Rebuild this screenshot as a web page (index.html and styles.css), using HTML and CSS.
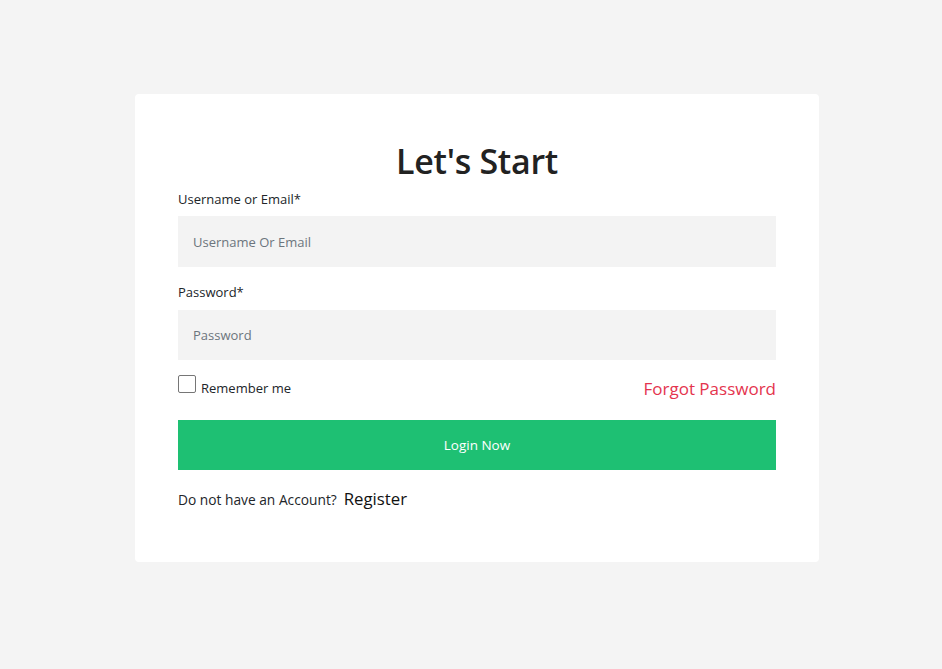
FILE: index.html
```html
<!DOCTYPE html>
<html>
<head>
<meta charset="utf-8">
<link rel="stylesheet" href="styles.css">
</head>
<body>
<div class="card">
  <h1 class="title">Let's Start</h1>
  <label class="label">Username or Email*</label>
  <div class="input">Username Or Email</div>
  <label class="label label-pw">Password*</label>
  <div class="input input-pw">Password</div>
  <div class="row">
    <div class="remember"><span class="check"></span><span class="remember-text">Remember me</span></div>
    <a class="forgot">Forgot Password</a>
  </div>
  <div class="btn">Login Now</div>
  <div class="footer"><span>Do not have an Account?</span><a class="register">Register</a></div>
</div>
</body>
</html>
```
FILE: styles.css
```css
* { box-sizing: border-box; }
body {
  margin: 0;
  background: #f4f4f4;
  font-family: "Open Sans", "Noto Sans", sans-serif;
  color: #212529;
}
.card {
  width: 684px;
  margin: 94px 0 0 135px;
  background: #fff;
  border-radius: 4px;
  padding: 43px 43px 50px;
  display: flex;
  flex-direction: column;
}
.title {
  margin: 0;
  text-align: center;
  font-size: 34px;
  font-weight: 600;
  line-height: 48px;
  color: #222;
  letter-spacing: -0.3px;
}
.label {
  font-size: 13px;
  line-height: 20px;
  margin-top: 4px;
  margin-bottom: 7px;
}
.label-pw { margin-top: 15px; margin-bottom: 8px; }
.input {
  height: 51px;
  background: #f3f3f3;
  padding-left: 15px;
  display: flex;
  align-items: center;
  font-size: 13px;
  color: #6c757d;
}
.input-pw { height: 50px; }
.row {
  margin-top: 15px;
  height: 25px;
  display: flex;
  justify-content: space-between;
  align-items: flex-start;
}
.remember {
  display: flex;
  align-items: flex-start;
  font-size: 13px;
}
.check {
  width: 18px;
  height: 18px;
  border: 1px solid #767676;
  border-radius: 2px;
  margin-right: 5px;
}
.remember-text {
  margin-top: 4px;
  line-height: 18px;
}
.forgot {
  color: #e4344e;
  font-size: 17px;
  line-height: 24px;
  margin-top: 2px;
}
.btn {
  margin-top: 20px;
  height: 50px;
  background: #1ec073;
  color: #fff;
  display: flex;
  align-items: center;
  justify-content: center;
  font-size: 13.5px;
}
.footer {
  margin-top: 17px;
  display: flex;
  align-items: baseline;
  font-size: 13.75px;
  line-height: 24px;
}
.register {
  margin-left: 7px;
  font-size: 16.8px;
  color: #111;
}
```
